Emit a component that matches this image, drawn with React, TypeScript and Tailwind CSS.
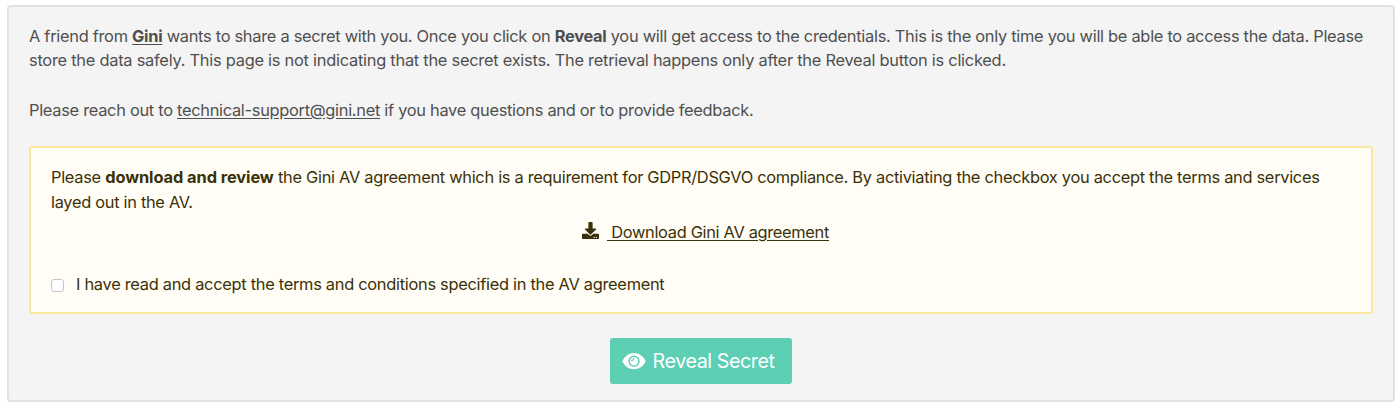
import type { ReactNode } from "react"
import { FaDownload } from "react-icons/fa"

function EyeIcon({ className = "" }: { className?: string }) {
  return (
    <svg viewBox="0 0 24 18" className={className} fill="none">
      <path
        d="M0.3 9.3C2.6 4.2 7 1 12 1s9.4 3.2 11.7 8.3C21.4 14.3 17 17.3 12 17.3S2.6 14.3 0.3 9.3Z"
        fill="currentColor"
      />
      <circle cx="12" cy="9.2" r="4.9" stroke="#5dcfb4" strokeWidth="1.5" />
      <path d="M9.3 8.6a2.3 2.3 0 0 0 2.4-2.6" stroke="#5dcfb4" strokeWidth="1.3" />
    </svg>
  )
}

function Line({ className = "", children }: { className?: string; children: ReactNode }) {
  return (
    <div className="h-[24.7px]">
      <span className={`whitespace-pre ${className}`}>{children}</span>
    </div>
  )
}

function Agreement() {
  return (
    <div className="mt-[23.5px] h-[168px] rounded-[3px] border-2 border-[#fae69e] bg-[#fffdf5] px-5 pt-[17px] text-[#3b3108]">
      <Line className="tracking-[-0.295px]">
        Please <strong className="font-bold tracking-[-0.08px]">download and review</strong> the Gini AV agreement which is a requirement for GDPR/DSGVO compliance. By activiating the checkbox you accept the terms and services
      </Line>
      <Line className="tracking-[-0.3px]">layed out in the AV.</Line>

      <div className="mt-1.5 flex h-[25px] items-center justify-center pl-[9px]">
        <FaDownload className="mr-2 -mt-1 size-[17px]" />
        <a href="#" className="whitespace-pre tracking-[-0.32px] underline underline-offset-2"> Download Gini AV agreement</a>
      </div>

      <label className="mt-[27px] flex h-[25px] items-center">
        <input type="checkbox" className="mt-px mr-3 size-[13px] appearance-none rounded-[3px] border border-[#c4c4c4] bg-white" />
        <span className="whitespace-nowrap tracking-[-0.285px]">I have read and accept the terms and conditions specified in the AV agreement</span>
      </label>
    </div>
  )
}

export default function App() {
  return (
    <div className="h-[408px] bg-white pt-[5px] pr-[5px] pl-[7px] font-['Inter',sans-serif] text-[16.4px] leading-[24.7px]">
      <div className="h-[397px] rounded-[4px] border-2 border-[#e2e2e2] bg-[#f4f4f4] px-5 pt-[16.6px] text-[#4f4f4f]">
        <Line className="tracking-[-0.284px]">
          A friend from <a href="#" className="font-bold underline underline-offset-2">Gini</a> wants to share a secret with you. Once you click on <strong className="font-bold">Reveal</strong> you will get access to the credentials. This is the only time you will be able to access the data. Please
        </Line>
        <Line className="tracking-[-0.253px]">store the data safely. This page is not indicating that the secret exists. The retrieval happens only after the Reveal button is clicked.</Line>
        <div className="mt-[24.7px]">
          <Line className="tracking-[-0.29px]">
            Please reach out to <a href="#" className="underline underline-offset-2">technical-support@gini.net</a> if you have questions and or to provide feedback.
          </Line>
        </div>

        <Agreement />

        <div className="mt-[24.5px] flex justify-center">
          <button className="flex h-[46px] w-[182px] items-center rounded-[3px] bg-[#5dcfb4] pl-[11.5px] text-[19.7px] text-white">
            <EyeIcon className="mr-[7px] h-[18px] w-6" />
            <span className="whitespace-nowrap pt-px tracking-[-0.42px]">Reveal Secret</span>
          </button>
        </div>
      </div>
    </div>
  )
}
